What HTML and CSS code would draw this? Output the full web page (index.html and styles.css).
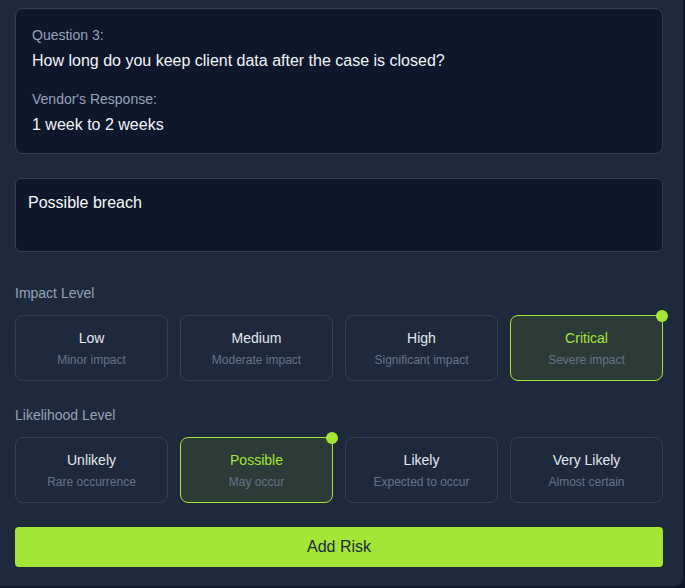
FILE: index.html
```html
<!DOCTYPE html>
<html>
<head>
<meta charset="utf-8">
<link rel="stylesheet" href="styles.css">
</head>
<body>
<div class="panel">
  <div class="question-card">
    <div class="label">Question 3:</div>
    <div class="value">How long do you keep client data after the case is closed?</div>
    <div class="label spaced">Vendor's Response:</div>
    <div class="value">1 week to 2 weeks</div>
  </div>

  <div class="textarea">Possible breach</div>

  <div class="section">
    <div class="section-label">Impact Level</div>
    <div class="options">
      <div class="option"><div class="opt-title">Low</div><div class="opt-sub">Minor impact</div></div>
      <div class="option"><div class="opt-title">Medium</div><div class="opt-sub">Moderate impact</div></div>
      <div class="option"><div class="opt-title">High</div><div class="opt-sub">Significant impact</div></div>
      <div class="option selected"><div class="opt-title">Critical</div><div class="opt-sub">Severe impact</div><span class="dot"></span></div>
    </div>
  </div>

  <div class="section">
    <div class="section-label">Likelihood Level</div>
    <div class="options">
      <div class="option"><div class="opt-title">Unlikely</div><div class="opt-sub">Rare occurrence</div></div>
      <div class="option selected"><div class="opt-title">Possible</div><div class="opt-sub">May occur</div><span class="dot"></span></div>
      <div class="option"><div class="opt-title">Likely</div><div class="opt-sub">Expected to occur</div></div>
      <div class="option"><div class="opt-title">Very Likely</div><div class="opt-sub">Almost certain</div></div>
    </div>
  </div>

  <button class="add-btn">Add Risk</button>
</div>
</body>
</html>
```

FILE: styles.css
```css
* { box-sizing: border-box; }
html, body {
  margin: 0;
  padding: 0;
  background: #0f172a;
  font-family: "Liberation Sans", Arial, sans-serif;
}
.panel {
  width: 683px;
  height: 586px;
  background: #1e293b;
  border-bottom-right-radius: 8px;
  padding: 8px 20px 0 15px;
  display: flex;
  flex-direction: column;
}
.question-card {
  background: #0f172a;
  border: 1px solid #334155;
  border-radius: 8px;
  padding: 16px 16px 16px 16px;
}
.label {
  font-size: 14px;
  line-height: 20px;
  color: #94a3b8;
}
.label.spaced { margin-top: 16px; }
.value {
  font-size: 16px;
  line-height: 24px;
  color: #f1f5f9;
  margin-top: 4px;
}
.textarea {
  margin-top: 24px;
  height: 74px;
  background: #0f172a;
  border: 1px solid #334155;
  border-radius: 6px;
  padding: 12px 12px;
  font-size: 16px;
  line-height: 24px;
  color: #f8fafc;
}
.section { margin-top: 31px; }
.section + .section { margin-top: 24px; }
.section-label {
  font-size: 14px;
  line-height: 20px;
  color: #94a3b8;
  margin-bottom: 12px;
}
.options {
  display: grid;
  grid-template-columns: repeat(4, 1fr);
  gap: 12px;
}
.option {
  position: relative;
  height: 66px;
  border: 1px solid #334155;
  border-radius: 8px;
  padding: 12px 8px;
  text-align: center;
}
.opt-title {
  font-size: 14px;
  line-height: 20px;
  color: #e2e8f0;
}
.opt-sub {
  font-size: 12px;
  line-height: 16px;
  margin-top: 4px;
  color: #64748b;
}
.option.selected {
  border-color: #a3e635;
  background: #2c3b37;
}
.option.selected .opt-title { color: #a3e635; }
.dot {
  position: absolute;
  top: -6px;
  right: -6px;
  width: 12px;
  height: 12px;
  border-radius: 50%;
  background: #a3e635;
}
.add-btn {
  margin-top: 24px;
  height: 40px;
  width: 100%;
  border: none;
  border-radius: 4px;
  background: #a3e635;
  color: #1e293b;
  font-family: "Liberation Sans", Arial, sans-serif;
  font-size: 16px;
}
```
